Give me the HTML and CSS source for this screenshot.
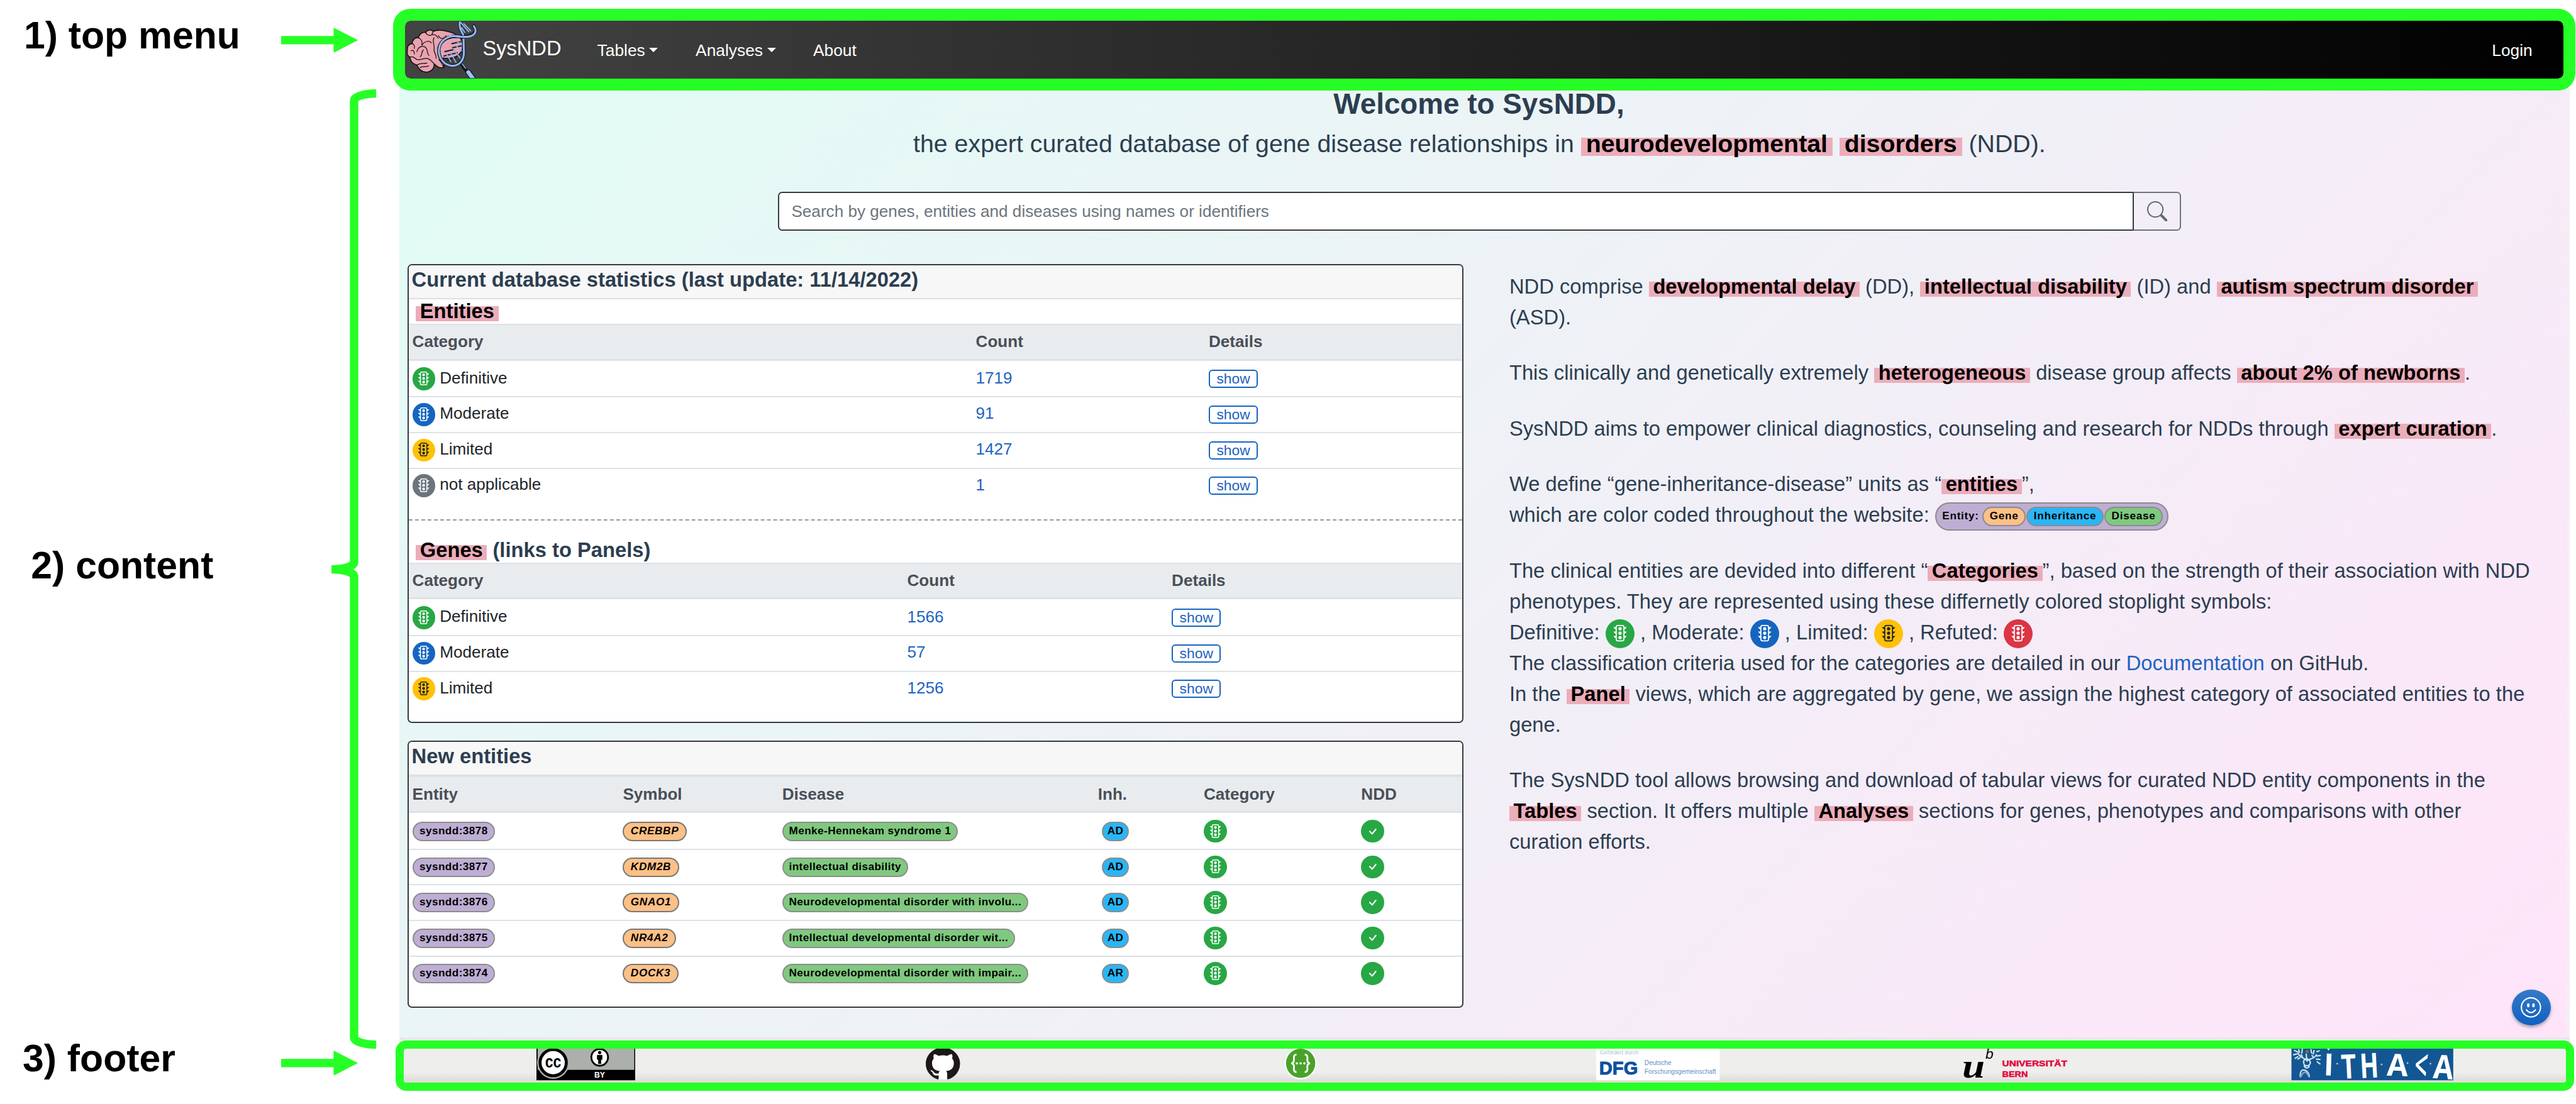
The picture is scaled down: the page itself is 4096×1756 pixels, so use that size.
FILE: index.html
```html
<!DOCTYPE html>
<html lang="en">
<head>
<meta charset="utf-8">
<title>SysNDD</title>
<link rel="stylesheet" href="styles.css">
</head>
<body>
<svg class="defs" aria-hidden="true">
  <symbol id="i-stop" viewBox="0 0 16 16"><path d="M8 5a1.5 1.5 0 1 0 0-3 1.5 1.5 0 0 0 0 3zm0 4a1.5 1.5 0 1 0 0-3 1.5 1.5 0 0 0 0 3zm1.5 2.5a1.5 1.5 0 1 1-3 0 1.5 1.5 0 0 1 3 0z"/><path d="M4 2a2 2 0 0 1 2-2h4a2 2 0 0 1 2 2h2c-.167.5-.8 1.6-2 2v2h2c-.167.5-.8 1.6-2 2v2h2c-.167.5-.8 1.6-2 2v1a2 2 0 0 1-2 2H6a2 2 0 0 1-2-2v-1c-1.2-.4-1.833-1.5-2-2h2V8c-1.2-.4-1.833-1.5-2-2h2V4c-1.2-.4-1.833-1.5-2-2h2zm2-1a1 1 0 0 0-1 1v11a1 1 0 0 0 1 1h4a1 1 0 0 0 1-1V2a1 1 0 0 0-1-1H6z"/></symbol>
  <symbol id="i-check" viewBox="0 0 16 16"><path d="M10.97 4.97a.75.75 0 0 1 1.07 1.05l-3.99 4.99a.75.75 0 0 1-1.08.02L4.324 8.384a.75.75 0 1 1 1.06-1.06l2.094 2.093 3.473-4.425a.267.267 0 0 1 .02-.022z"/></symbol>
  <symbol id="i-arrow" viewBox="0 0 129 42"><path d="M0 14H88V0L129 21L88 42V28H0Z"/></symbol>
</svg>

<aside class="notes">
  <div class="note note-top"><span class="note-text">1) top menu</span><svg class="arrow"><use href="#i-arrow"/></svg></div>
  <div class="note note-mid"><span class="note-text">2) content</span>
    <svg class="brace" viewBox="556 150 75 1609"><path d="M631 157A37 12 0 0 0 594 169V943A37 12 0 0 1 556 955A37 12 0 0 1 594 967V1740A37 12 0 0 0 631 1752" /></svg></div>
  <div class="note note-end"><span class="note-text">3) footer</span><svg class="arrow"><use href="#i-arrow"/></svg></div>
</aside>

<div class="app">
  <nav class="navbar">
    <svg class="logo" viewBox="6 48 366 285">
      <g stroke="#160f12" stroke-width="5" stroke-linejoin="round" stroke-linecap="round" fill="#e8a3ae">
        <path d="M12 195C8 175 20 160 36 160C36 140 50 128 66 130C72 110 88 100 104 104C110 90 130 88 142 98C165 88 195 92 220 100C260 110 290 130 290 170C290 220 240 240 192 232L196 280C170 285 160 275 146 262C148 285 130 305 102 303C80 300 66 286 60 268C36 262 26 246 24 228C12 220 8 208 12 195Z"/>
        <g fill="none" stroke-width="4">
          <path d="M36 160C44 164 50 172 46 184M66 130C80 136 90 150 84 168M104 104C108 116 122 122 134 116C150 112 160 120 166 132M142 98C138 108 136 112 134 116M60 200C64 176 90 166 104 180C118 194 108 210 120 220M84 168C96 150 122 140 132 156M146 130C134 150 150 166 146 184C142 206 160 216 156 234M24 228C44 220 48 236 60 240C80 246 96 228 116 236C136 244 140 256 146 262M60 268C76 256 96 262 110 258M76 280C90 272 100 280 118 272M168 120C176 140 196 136 206 120M30 196C40 190 50 200 46 212M92 192C80 204 88 218 76 226M170 240C180 250 188 262 192 276"/>
        </g>
      </g>
      <g fill="none" stroke-linecap="round">
        <path stroke="#20242d" stroke-width="7" d="M200 200L244 190M196 222L262 206M214 246L262 224M236 160L280 150M240 180L288 170"/>
        <path stroke="#90b2ee" stroke-width="6" d="M206 208L230 250M224 200L256 254M244 190L276 232M254 168L284 196M262 150L292 172"/>
        <path stroke="#111722" stroke-width="17" d="M270 124C210 118 174 150 170 186C166 236 200 272 240 272C276 270 296 240 296 206L294 148M240 124C290 124 344 130 354 98C356 88 352 80 346 72M276 54C272 80 284 100 292 112M276 254L318 310"/>
        <path stroke="#93b5f2" stroke-width="10" d="M276 124C210 112 174 150 170 190C168 236 200 272 240 272C276 270 296 240 296 206L294 140M226 120C290 128 346 134 354 100C356 88 352 80 346 72M276 52C270 76 282 98 292 114"/>
        <path stroke="#93b5f2" stroke-width="6" d="M280 54L320 100M296 60L330 96M284 80L300 104"/>
        <path stroke="#111722" stroke-width="28" d="M318 304L340 334"/>
        <path stroke="#9fc0fa" stroke-width="20" d="M318 304L340 334"/>
        <path stroke="#93b5f2" stroke-width="5" d="M288 262L304 284"/>
      </g>
    </svg>
    <span class="brand">SysNDD</span>
    <span class="nav-link tables">Tables<i class="caret"></i></span>
    <span class="nav-link analyses">Analyses<i class="caret"></i></span>
    <span class="nav-link">About</span>
    <span class="nav-link login">Login</span>
  </nav>

  <main class="page">
    <h1>Welcome to SysNDD,</h1>
    <p class="lead">the expert curated database of gene disease relationships in <mark>neurodevelopmental</mark> <mark>disorders</mark> (NDD).</p>
    <div class="search">
      <div class="search-input"><span>Search by genes, entities and diseases using names or identifiers</span></div>
      <div class="search-btn"><svg viewBox="0 0 16 16"><path d="M11.742 10.344a6.5 6.5 0 1 0-1.397 1.398h-.001c.03.04.062.078.098.115l3.85 3.85a1 1 0 0 0 1.415-1.414l-3.85-3.85a1.007 1.007 0 0 0-.115-.1zM12 6.5a5.5 5.5 0 1 1-11 0 5.5 5.5 0 0 1 11 0z"/></svg></div>
    </div>

    <div class="columns">
      <div class="cards">
        <section class="card card-stats">
          <h2 class="card-title">Current database statistics (last update: 11/14/2022)</h2>
          <h3><mark>Entities</mark></h3>
          <table>
            <colgroup><col class="e1"><col class="e2"><col></colgroup>
            <thead><tr><th>Category</th><th>Count</th><th>Details</th></tr></thead>
            <tbody>
              <tr><td><span class="dot green"><svg><use href="#i-stop"/></svg></span>Definitive</td><td><a>1719</a></td><td><span class="btn">show</span></td></tr>
              <tr><td><span class="dot blue"><svg><use href="#i-stop"/></svg></span>Moderate</td><td><a>91</a></td><td><span class="btn">show</span></td></tr>
              <tr><td><span class="dot yellow"><svg><use href="#i-stop"/></svg></span>Limited</td><td><a>1427</a></td><td><span class="btn">show</span></td></tr>
              <tr><td><span class="dot gray"><svg><use href="#i-stop"/></svg></span>not applicable</td><td><a>1</a></td><td><span class="btn">show</span></td></tr>
            </tbody>
          </table>
          <div class="dashes"></div>
          <h3 class="genes"><mark>Genes</mark> (links to Panels)</h3>
          <table>
            <colgroup><col class="g1"><col class="g2"><col></colgroup>
            <thead><tr><th>Category</th><th>Count</th><th>Details</th></tr></thead>
            <tbody>
              <tr><td><span class="dot green"><svg><use href="#i-stop"/></svg></span>Definitive</td><td><a>1566</a></td><td><span class="btn">show</span></td></tr>
              <tr><td><span class="dot blue"><svg><use href="#i-stop"/></svg></span>Moderate</td><td><a>57</a></td><td><span class="btn">show</span></td></tr>
              <tr><td><span class="dot yellow"><svg><use href="#i-stop"/></svg></span>Limited</td><td><a>1256</a></td><td><span class="btn">show</span></td></tr>
            </tbody>
          </table>
        </section>

        <section class="card card-new">
          <h2 class="card-title">New entities</h2>
          <table>
            <colgroup><col class="n1"><col class="n2"><col class="n3"><col class="n4"><col class="n5"><col></colgroup>
            <thead><tr><th>Entity</th><th>Symbol</th><th>Disease</th><th>Inh.</th><th>Category</th><th>NDD</th></tr></thead>
            <tbody>
              <tr><td><span class="pill entity">sysndd:3878</span></td><td><span class="pill gene">CREBBP</span></td><td><span class="pill disease">Menke-Hennekam syndrome 1</span></td><td><span class="pill inh">AD</span></td><td><span class="dot green"><svg><use href="#i-stop"/></svg></span></td><td><span class="dot green"><svg><use href="#i-check"/></svg></span></td></tr>
              <tr><td><span class="pill entity">sysndd:3877</span></td><td><span class="pill gene">KDM2B</span></td><td><span class="pill disease">intellectual disability</span></td><td><span class="pill inh">AD</span></td><td><span class="dot green"><svg><use href="#i-stop"/></svg></span></td><td><span class="dot green"><svg><use href="#i-check"/></svg></span></td></tr>
              <tr><td><span class="pill entity">sysndd:3876</span></td><td><span class="pill gene">GNAO1</span></td><td><span class="pill disease">Neurodevelopmental disorder with involu...</span></td><td><span class="pill inh">AD</span></td><td><span class="dot green"><svg><use href="#i-stop"/></svg></span></td><td><span class="dot green"><svg><use href="#i-check"/></svg></span></td></tr>
              <tr><td><span class="pill entity">sysndd:3875</span></td><td><span class="pill gene">NR4A2</span></td><td><span class="pill disease">Intellectual developmental disorder wit...</span></td><td><span class="pill inh">AD</span></td><td><span class="dot green"><svg><use href="#i-stop"/></svg></span></td><td><span class="dot green"><svg><use href="#i-check"/></svg></span></td></tr>
              <tr><td><span class="pill entity">sysndd:3874</span></td><td><span class="pill gene">DOCK3</span></td><td><span class="pill disease">Neurodevelopmental disorder with impair...</span></td><td><span class="pill inh">AR</span></td><td><span class="dot green"><svg><use href="#i-stop"/></svg></span></td><td><span class="dot green"><svg><use href="#i-check"/></svg></span></td></tr>
            </tbody>
          </table>
        </section>
      </div>

      <article class="intro">
        <p>NDD comprise <mark>developmental delay</mark> (DD), <mark>intellectual disability</mark> (ID) and <mark>autism spectrum disorder</mark><br>(ASD).</p>
        <p>This clinically and genetically extremely <mark>heterogeneous</mark> disease group affects <mark>about 2% of newborns</mark>.</p>
        <p>SysNDD aims to empower clinical diagnostics, counseling and research for NDDs through <mark>expert curation</mark>.</p>
        <p>We define “gene-inheritance-disease” units as “<mark>entities</mark>”,<br>which are color coded throughout the website: <span class="pill combo">Entity: <span class="pill gene-n">Gene</span><span class="pill inh-n">Inheritance</span><span class="pill disease">Disease</span></span></p>
        <p>The clinical entities are devided into different “<mark>Categories</mark>”, based on the strength of their association with NDD<br>phenotypes. They are represented using these differnetly colored stoplight symbols:<br>Definitive: <span class="dot big green"><svg><use href="#i-stop"/></svg></span> , Moderate: <span class="dot big blue"><svg><use href="#i-stop"/></svg></span> , Limited: <span class="dot big yellow"><svg><use href="#i-stop"/></svg></span> , Refuted: <span class="dot big red"><svg><use href="#i-stop"/></svg></span><br>The classification criteria used for the categories are detailed in our <a>Documentation</a> on GitHub.<br>In the <mark>Panel</mark> views, which are aggregated by gene, we assign the highest category of associated entities to the<br>gene.</p>
        <p>The SysNDD tool allows browsing and download of tabular views for curated NDD entity components in the<br><mark>Tables</mark> section. It offers multiple <mark>Analyses</mark> sections for genes, phenotypes and comparisons with other<br>curation efforts.</p>
      </article>
    </div>

    <div class="feedback"><svg viewBox="0 0 34 34"><circle cx="17" cy="17" r="15.8" fill="none" stroke="#fff" stroke-width="2.2"/><ellipse cx="12.6" cy="13.6" rx="2.1" ry="3.4" fill="#fff"/><ellipse cx="21.2" cy="13.6" rx="2.1" ry="3.4" fill="#fff"/><path d="M9.5 21Q17 30 24.5 21" fill="none" stroke="#fff" stroke-width="2.2" stroke-linecap="round"/></svg></div>
  </main>

  <div class="footer-strip">
    <footer class="footer">
      <div class="slot"><svg class="cc" viewBox="0 0 166 53">
        <rect width="166" height="53" fill="#000"/><rect x="2" width="162" height="35.5" fill="#abb1aa"/>
        <circle cx="28" cy="23.5" r="27" fill="#abb1aa"/><circle cx="28" cy="23.5" r="22" fill="#fff" stroke="#000" stroke-width="5"/>
        <text x="28" y="32" text-anchor="middle" class="cc-mark" textLength="27" lengthAdjust="spacingAndGlyphs">cc</text>
        <circle cx="106" cy="14.5" r="14" fill="#fff" stroke="#000" stroke-width="3"/><circle cx="106" cy="6.5" r="2.8"/><path d="M101.5 10.5h9v8h-2v7h-5v-7h-2z"/>
        <text x="106" y="49" text-anchor="middle" class="cc-by">BY</text></svg></div>
      <div class="slot"><svg class="gh" viewBox="0 0 16 15.2" preserveAspectRatio="none"><path fill="#fff" d="M3 2h10v8l-2 2v3H6v-3l-3-2z"/><path fill="#1b1817" d="M8-.6C3.58-.6 0 3 0 7.4c0 3.54 2.29 6.53 5.47 7.59.4.07.55-.17.55-.38 0-.19-.01-.82-.01-1.49-2.01.37-2.53-.49-2.69-.94-.09-.23-.48-.94-.82-1.13-.28-.15-.68-.52-.01-.53.63-.01 1.08.58 1.23.82.72 1.21 1.87.87 2.33.66.07-.52.28-.87.51-1.07-1.78-.2-3.64-.89-3.64-3.95 0-.87.31-1.59.82-2.15-.08-.2-.36-1.02.08-2.12 0 0 .67-.21 2.2.82.64-.18 1.32-.27 2-.27.68 0 1.36.09 2 .27 1.53-1.04 2.2-.82 2.2-.82.44 1.1.16 1.92.08 2.12.51.56.82 1.27.82 2.15 0 3.07-1.87 3.75-3.65 3.95.29.25.54.73.54 1.48 0 1.07-.01 1.93-.01 2.2 0 .21.15.46.55.38A8.012 8.012 0 0 0 16 7.4c0-4.42-3.58-8-8-8z"/></svg></div>
      <div class="slot"><svg class="api" viewBox="0 0 56 54"><circle cx="28" cy="25" r="27.5" fill="#fff"/><circle cx="28" cy="25" r="25" fill="#49a32b"/><path d="M21 10Q16.500 10 16.500 14.500V20Q16.500 24.500 12 25Q16.500 25.500 16.500 30V35.500Q16.500 40 21 40M35 10Q39.500 10 39.500 14.500V20Q39.500 24.500 44 25Q39.500 25.500 39.500 30V35.500Q39.500 40 35 40" fill="none" stroke="#fff" stroke-width="3"/><circle cx="21.500" cy="25" r="2" fill="#fff"/><circle cx="28" cy="25" r="2" fill="#fff"/><circle cx="34.500" cy="25" r="2" fill="#fff"/></svg></div>
      <div class="slot"><svg class="dfg" viewBox="0 0 207 53"><rect width="207" height="53" fill="#fff"/>
        <text x="6" y="10" class="dfg-top" textLength="65" lengthAdjust="spacingAndGlyphs">Gefördert durch</text>
        <text x="5" y="43" class="dfg-name" textLength="65" lengthAdjust="spacingAndGlyphs">DFG</text>
        <text x="81" y="27" class="dfg-sub" textLength="45" lengthAdjust="spacingAndGlyphs">Deutsche</text>
        <text x="81" y="42" class="dfg-sub" textLength="120" lengthAdjust="spacingAndGlyphs">Forschungsgemeinschaft</text></svg></div>
      <div class="slot"><svg class="bern" viewBox="0 0 178 53">
        <text x="0" y="48" class="bern-u" textLength="38" lengthAdjust="spacingAndGlyphs">u</text><text x="39" y="17" class="bern-b">b</text>
        <text x="67" y="29" class="bern-t" textLength="109" lengthAdjust="spacingAndGlyphs">UNIVERSITÄT</text><text x="67" y="47" class="bern-t" textLength="43" lengthAdjust="spacingAndGlyphs">BERN</text></svg></div>
      <div class="slot"><svg class="ithaca" viewBox="117 357 824 161">
        <rect x="117" y="357" width="824" height="161" fill="#125793"/>
        <g fill="none" stroke="#cfe0ee" stroke-linecap="round" stroke-width="7">
          <path d="M162 500C158 440 210 470 208 500M180 425C176 450 210 450 214 428M178 425C180 400 214 405 212 428M182 445C190 462 210 455 206 440M196 420L192 385M198 418C215 405 232 410 244 388M190 414C176 400 160 402 150 380"/>
          <path d="M132 366L150 374M128 388L144 384M136 406L150 398M154 362L158 376M172 360L170 380M216 362L220 380M232 366L228 384M246 372L258 368M246 394L264 392M244 410L262 412M248 424L262 434M228 400L222 392M172 396L166 388M150 410L160 404"/>
        </g>
        <circle cx="197" cy="372" r="8" fill="#b9543f"/><path d="M165 500Q185 455 206 500" fill="none" stroke="#7fa5c7" stroke-width="8"/>
        <g class="ith" text-anchor="middle">
          <text transform="translate(305 493) rotate(2)">I</text>
          <text transform="translate(411 509) rotate(-3) scale(.85 1.1)">T</text>
          <text transform="translate(516 505) rotate(-3) scale(.8 1.12)">H</text>
          <text transform="translate(655 496) rotate(2)">A</text>
          <text class="ith-c" transform="translate(770 520) rotate(6) scale(.75 1.45)">&lt;</text>
          <text transform="translate(887 510) rotate(4) scale(.95 1.08)">A</text>
        </g>
        <g fill="#9dbbd6"><circle cx="350" cy="433" r="5"/><circle cx="576" cy="437" r="5"/><circle cx="708" cy="430" r="5"/><circle cx="825" cy="433" r="5"/></g>
        <path d="M299 357h14l-8 10z" fill="#fff"/></svg></div>
    </footer>
  </div>
</div>
</body>
</html>
```
FILE: styles.css
```css
html { font-size: 9.486px; }
* { box-sizing: border-box; }
body {
  margin: 0; width: 4096px; height: 1756px; overflow: hidden; background: #fff;
  display: flex; font-family: "Liberation Sans", Arial, sans-serif; color: #2c3e50;
}
h1, h2, h3, p { margin: 0; }
a { color: #1e63c0; }
.defs { position: absolute; width: 0; height: 0; }

/* notes beside the page */
.notes { width: 65.9rem; flex: none; display: flex; flex-direction: column; color: #000; }
.note { display: flex; align-items: center; justify-content: space-between; }
.note-text { font-size: 6.4rem; font-weight: 700; white-space: nowrap; line-height: 4rem; }
.note-top { height: 11.96rem; padding: 0 5.9rem 0 4rem; }
.note-mid { height: 160.9rem; margin-top: 3.04rem; padding: 0 2.8rem 0 5.2rem; }
.note-mid .note-text { padding-bottom: 1.1rem; }
.note-end { height: 3.2rem; padding: 0 5.9rem 0 3.8rem; }
.arrow { width: 12.9rem; height: 4.2rem; fill: #26ff26; margin-top: 1.44rem; flex: none; }
.brace { width: 7.5rem; height: 160.9rem; flex: none; fill: none; stroke: #26ff26; stroke-width: 14; }

.app { width: 365.9rem; flex: none; padding-top: 1.5rem; }

/* navigation */
.navbar {
  position: relative; z-index: 1; width: 365.8rem; height: 13.7rem;
  border: 2.1rem solid #26ff26; border-radius: 2.9rem;
  background: linear-gradient(to right, #434343, #000) padding-box;
  display: flex; align-items: center; color: #fff; overflow: hidden; padding: 0 5.2rem 0 .2rem;
}
.logo { width: 12.2rem; height: 9.5rem; flex: none; }
.brand { font-size: 3.44rem; margin: -.4rem 0 0 .6rem; width: 19.2rem; }
.nav-link { font-size: 2.78rem; line-height: 4rem; display: flex; align-items: center; padding-top: .3rem; }
.tables { width: 16.5rem; }
.analyses { width: 19.7rem; }
.login { margin-left: auto; }
.caret { border: .8rem solid transparent; border-top-color: #fff; border-bottom: 0; margin: -.3rem 0 0 .7rem; }

/* page */
.page {
  position: relative; margin: -3rem 0 0 1rem; width: 363.8rem; height: 161.7rem; padding-top: 2.38rem;
  border-right: 4px solid #f1f1f1; white-space: nowrap;
  background: linear-gradient(135deg, #e1fcf5 0%, #eff1f6 48%, #ffe4f9 100%);
}
h1 { font-size: 4.83rem; line-height: 5.8rem; text-align: center; padding-right: 1.4rem; }
.lead { font-size: 4.145rem; line-height: 6.2rem; margin-top: .59rem; text-align: center; padding-right: 1.2rem; }
mark {
  color: #000; font-weight: 700; padding: 0 .2em;
  background: linear-gradient(transparent 30%, #ebadba 30%, #ebadba 95%, transparent 95%);
}
.search { display: flex; height: 6.53rem; margin: 5rem 0 0 63.5rem; width: 235.2rem; }
.search-input {
  flex: 1; background: #fff; border: 2px solid #343a40; border-radius: .7rem 0 0 .7rem;
  display: flex; align-items: center; padding-left: 2.05rem; font-size: 2.755rem; color: #6c757d;
}
.search-btn { width: 8.1rem; margin-left: -2px; border: 2px solid #6c757d; border-left-color: #343a40; border-radius: 0 .7rem .7rem 0; display: flex; align-items: center; justify-content: center; }
.search-btn svg { width: 3.4rem; height: 3.4rem; fill: #5f6a73; }

.columns { display: flex; margin-top: 5.57rem; padding-left: 1.4rem; }
.cards { width: 177rem; flex: none; }
.card { background: #fff; border: 2px solid #343a40; border-radius: .75rem; overflow: hidden; }
.card-stats { height: 77rem; }
.card-new { height: 44.8rem; margin-top: 2.9rem; }
.card-title {
  font-size: 3.45rem; line-height: 4.13rem; height: 5.75rem; padding: .35rem 0 0 .5rem;
  background: #f7f7f7; border-bottom: 2px solid #dfdfdf;
}
h3 { font-size: 3.45rem; line-height: 4rem; height: 4.05rem; padding-left: 1.2rem; }
.dashes { height: 0; border-top: 2px dashed #999; margin-top: 2.75rem; }
h3.genes { margin-top: 2.9rem; height: 4.1rem; }

table { width: 100%; table-layout: fixed; border-collapse: separate; border-spacing: 0; font-size: 2.75rem; color: #212529; }
th { height: 6.2rem; padding: 0 0 0 .6rem; text-align: left; background: #e9ecef; color: #495057; border-top: 2px solid #dee2e6; border-bottom: 3px solid #dee2e6; }
td { height: 5.97rem; padding: 0 0 .25rem .6rem; border-top: 2px solid #dee2e6; line-height: 4rem; }
tbody tr:first-child td { border-top-color: transparent; }
.e1 { width: 94.46rem; } .e2 { width: 39.04rem; }
.g1 { width: 82.96rem; } .g2 { width: 44.34rem; }
.n1 { width: 35.3rem; } .n2 { width: 26.7rem; } .n3 { width: 52.93rem; } .n4 { width: 17.73rem; } .n5 { width: 26.4rem; }

.dot {
  display: inline-flex; align-items: center; justify-content: center; vertical-align: middle;
  width: 3.86rem; height: 3.86rem; border-radius: 50%; margin-right: .75rem; fill: #fff;
}
.dot svg { width: 2.45rem; height: 2.45rem; }
.dot.big { width: 4.86rem; height: 4.86rem; margin: -.6rem 0; }
.dot.big svg { width: 2.95rem; height: 2.95rem; }
.green { background: #28a745; }
.blue { background: #1565c0; }
.yellow { background: #ffc107; fill: #212529; }
.gray { background: #6c757d; }
.red { background: #dc3545; }
.btn {
  display: inline-block; width: 8.25rem; height: 3.05rem; line-height: 2.55rem; vertical-align: middle; text-align: center;
  border: 2px solid #1565c0; border-radius: .6rem; color: #1e63c0; font-size: 2.41rem;
}
.pill {
  display: inline-block; height: 3.27rem; line-height: 2.65rem; vertical-align: middle; padding: 0 .93rem; color: #000;
  font-size: 1.81rem; font-weight: 700; border: 2px solid #8c8c8c; border-radius: 1.64rem; letter-spacing: .045rem;
}
.entity { background: #beaed4; padding: 0 1rem; }
.gene { background: #fdc086; font-style: italic; border-color: #777; padding: 0 1.1rem; letter-spacing: .07rem; }
.gene-n { background: #fdc086; }
.disease { background: #7fc97f; }
.inh, .inh-n { background: #29b6f6; }
.inh { margin-left: .7rem; padding: 0 .67rem; }
.combo { background: #beaed4; height: 4.8rem; border-radius: 2.4rem; padding: 0 .75rem 0 1rem; line-height: 4.2rem; margin: -.5rem 0; letter-spacing: .075rem; }
.combo .pill { vertical-align: baseline; padding: 0 1rem; letter-spacing: .075rem; }
.combo .pill + .pill { margin-left: .15rem; }

.intro { padding: 1.18rem 0 0 7.7rem; font-size: 3.452rem; line-height: 5.165rem; }
.intro p + p { margin-top: 4.15rem; }

.feedback {
  position: absolute; right: 2.75rem; bottom: 2rem; width: 6.54rem; height: 6rem; border-radius: 50%;
  background: linear-gradient(#3579c8, #1060c2); display: flex; align-items: center; justify-content: center; box-shadow: 0 3px 5px #0005;
}
.feedback svg { width: 3.45rem; height: 3.45rem; }

/* footer */
.footer-strip { margin-left: 1rem; width: 363.8rem; height: 7rem; background: #e8e8e8; padding-top: .6rem; }
.footer {
  margin-left: -.55rem; width: 365.1rem; height: 8.4rem; border: 1.4rem solid #26ff26; border-radius: 1.8rem;
  background: linear-gradient(#eeeeec 70%, #dcdad6) padding-box;
  display: grid; grid-template-columns: repeat(6, 59.9rem); padding-left: .5rem;
}
.slot { display: flex; justify-content: center; }
.slot svg { height: 5.3rem; flex: none; }
.cc { width: 16.6rem; overflow: hidden; } .slot .gh { width: 5.75rem; height: 5.2rem; } .api { width: 5.5rem; overflow: hidden; }
.dfg { width: 20.7rem; overflow: visible; } .bern { width: 17.8rem; overflow: visible; } .ithaca { width: 27.45rem; overflow: visible; }
.cc-mark { font: 700 29px "Liberation Sans", sans-serif; }
.cc-by { font: 700 13px "Liberation Sans", sans-serif; fill: #fff; }
.dfg-top { font: 10px "Liberation Sans", sans-serif; fill: #a5bfdc; }
.dfg-name { font: 700 32px "Liberation Sans", sans-serif; fill: #0a519c; stroke: #0a519c; stroke-width: 1; }
.dfg-sub { font: 12px "Liberation Sans", sans-serif; fill: #5f8fc4; }
.bern-u { font: italic 700 58px "Liberation Serif", serif; }
.bern-b { font: italic 24px "Liberation Sans", sans-serif; }
.bern-t { font: 700 14px "Liberation Sans", sans-serif; fill: #e4003c; stroke: #e4003c; stroke-width: .5; }
.ith { font: 700 156px "Open Sans", sans-serif; fill: #fff; }
.ith-c { font-weight: 600; }
```
